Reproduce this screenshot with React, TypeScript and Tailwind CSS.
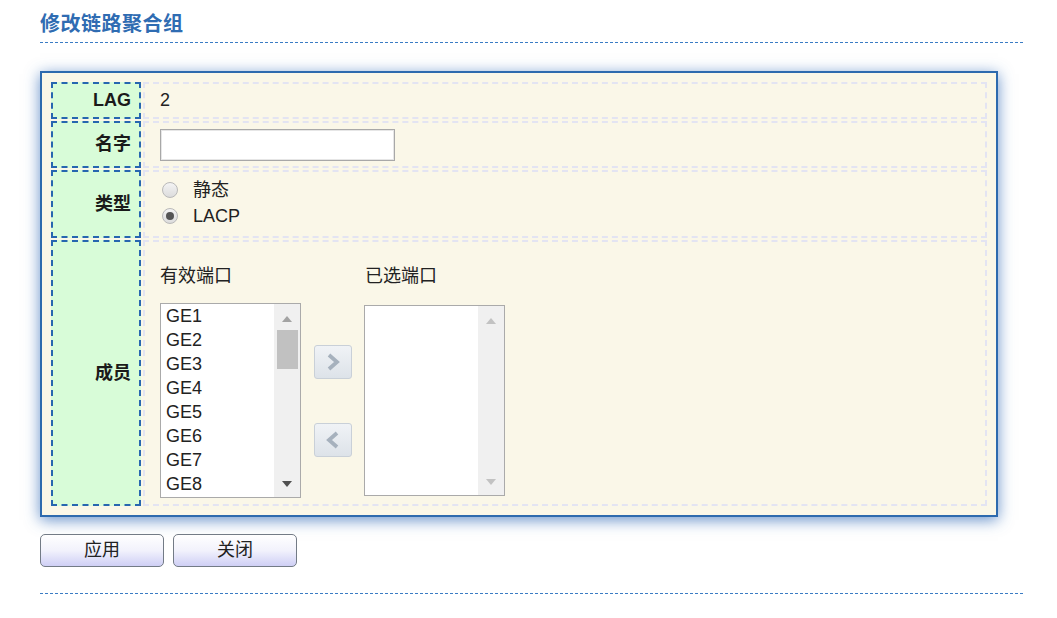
import React from 'react';

const font = { fontFamily: '"Liberation Sans", Arial, "Noto Sans CJK SC", sans-serif' };

function Radio({ checked, label }: { checked?: boolean; label: string }) {
  return (
    <label className="flex items-center h-[26px]">
      <span className="ml-[2px] w-[16px] h-[16px] rounded-full border border-[#b9b9b9] bg-gradient-to-b from-[#f4f4f4] to-[#dcdcdc] flex items-center justify-center">
        {checked && <span className="w-[8px] h-[8px] rounded-full bg-[#555]" />}
      </span>
      <span className="ml-[15px] text-[18px] text-[#222]">{label}</span>
    </label>
  );
}

function ListBox({ items, disabled, height }: { items: string[]; disabled?: boolean; height: string }) {
  const arrow = disabled ? '#c2c2c2' : '#a3a3a3';
  return (
    <div className={`w-[141px] ${height} border border-[#aaa] bg-white flex`}>
      <div className="flex-1 pl-[5px] pt-[1px] overflow-hidden">
        {items.map((it) => (
          <div key={it} className="h-[24px] leading-[22px] text-[18px] text-[#222]">{it}</div>
        ))}
      </div>
      <div className="w-[26px] bg-[#f0f0f0] flex flex-col items-center">
        <svg width="10" height="6" viewBox="0 0 10 6" className="mt-[12px]"><path d="M0 6 L5 0 L10 6Z" fill={arrow} /></svg>
        {!disabled && <div className="mt-[8px] w-[21px] h-[39px] bg-[#c1c1c1]" />}
        <div className="flex-1" />
        <svg width="10" height="6" viewBox="0 0 10 6" className="mb-[10px]"><path d="M0 0 L10 0 L5 6Z" fill={disabled ? arrow : '#505050'} /></svg>
      </div>
    </div>
  );
}

function MoveButton({ dir }: { dir: 'right' | 'left' }) {
  return (
    <button className="w-[38px] h-[34px] rounded-[3px] border border-[#c9d0d8] bg-gradient-to-b from-[#f0f3f6] to-[#dde3e9] flex items-center justify-center">
      <svg width="16" height="20" viewBox="0 0 16 20">
        {dir === 'right' ? (
          <path d="M4 3 L12 10 L4 17" fill="none" stroke="#a6b1bd" strokeWidth="3.8" strokeLinejoin="miter" />
        ) : (
          <path d="M12 3 L4 10 L12 17" fill="none" stroke="#a6b1bd" strokeWidth="3.8" strokeLinejoin="miter" />
        )}
      </svg>
    </button>
  );
}

const labelCell = 'bg-[#d8fcd8] border-2 border-dashed border-[#2766b0] flex items-center justify-end pr-[8px] text-[18px] font-bold text-[#1a1a1a]';
const valueCell = 'bg-[#faf7e8] border-2 border-dashed border-[#e3e4f2] pl-[15px]';

export default function App() {
  const ports = ['GE1', 'GE2', 'GE3', 'GE4', 'GE5', 'GE6', 'GE7', 'GE8'];
  return (
    <div className="bg-white w-[1057px] h-[618px] pl-[40px] pt-[12px]" style={font}>
      <div className="w-[983px]">
        <div className="pb-[6px] border-b border-dashed border-[#3b7cc4]">
          <h1 className="text-[20px] leading-[24px] font-bold text-[#2f6cb2] tracking-[0.5px]">修改链路聚合组</h1>
        </div>

        <div className="mt-[28px] w-[958px] border-2 border-[#2d6aae] bg-[#faf7e8] p-[9px] shadow-[0_3px_14px_rgba(40,100,180,0.7)]">
          <div className="grid grid-cols-[90px_1fr] grid-rows-[37px_47px_68px_266px] gap-[2px]">
            <div className={labelCell}>LAG</div>
            <div className={`${valueCell} flex items-center text-[18px] text-[#222]`}>2</div>

            <div className={labelCell}>名字</div>
            <div className={`${valueCell} flex items-center`}>
              <input
                type="text"
                className="w-[235px] h-[32px] border border-[#a8a8a8] bg-white outline-none shadow-[inset_0_0_0_1px_#e6e6e6]"
              />
            </div>

            <div className={labelCell}>类型</div>
            <div className={`${valueCell} flex flex-col justify-center pb-[2px]`}>
              <Radio label="静态" />
              <Radio label="LACP" checked />
            </div>

            <div className={labelCell}>成员</div>
            <div className={`${valueCell} pt-[24px]`}>
              <div className="flex gap-[13px]">
                <div className="flex flex-col">
                  <div className="text-[18px] leading-[20px] text-[#222]">有效端口</div>
                  <div className="mt-[17px]">
                    <ListBox items={ports} height="h-[195px]" />
                  </div>
                </div>
                <div className="flex flex-col pt-[79px] gap-[44px]">
                  <MoveButton dir="right" />
                  <MoveButton dir="left" />
                </div>
                <div className="flex flex-col -ml-[1px]">
                  <div className="text-[18px] leading-[20px] text-[#222] pl-[1px]">已选端口</div>
                  <div className="mt-[19px]">
                    <ListBox items={[]} disabled height="h-[191px]" />
                  </div>
                </div>
              </div>
            </div>
          </div>
        </div>

        <div className="mt-[17px] flex gap-[9px]">
          {['应用', '关闭'].map((t) => (
            <button
              key={t}
              className="w-[124px] h-[33px] rounded-[5px] border border-[#737b86] bg-gradient-to-b from-[#ffffff] via-[#f2f2fc] to-[#cfcff5] text-[18px] text-[#222]"
            >
              {t}
            </button>
          ))}
        </div>

        <div className="mt-[26px] border-t border-dashed border-[#3b7cc4]" />
      </div>
    </div>
  );
}
